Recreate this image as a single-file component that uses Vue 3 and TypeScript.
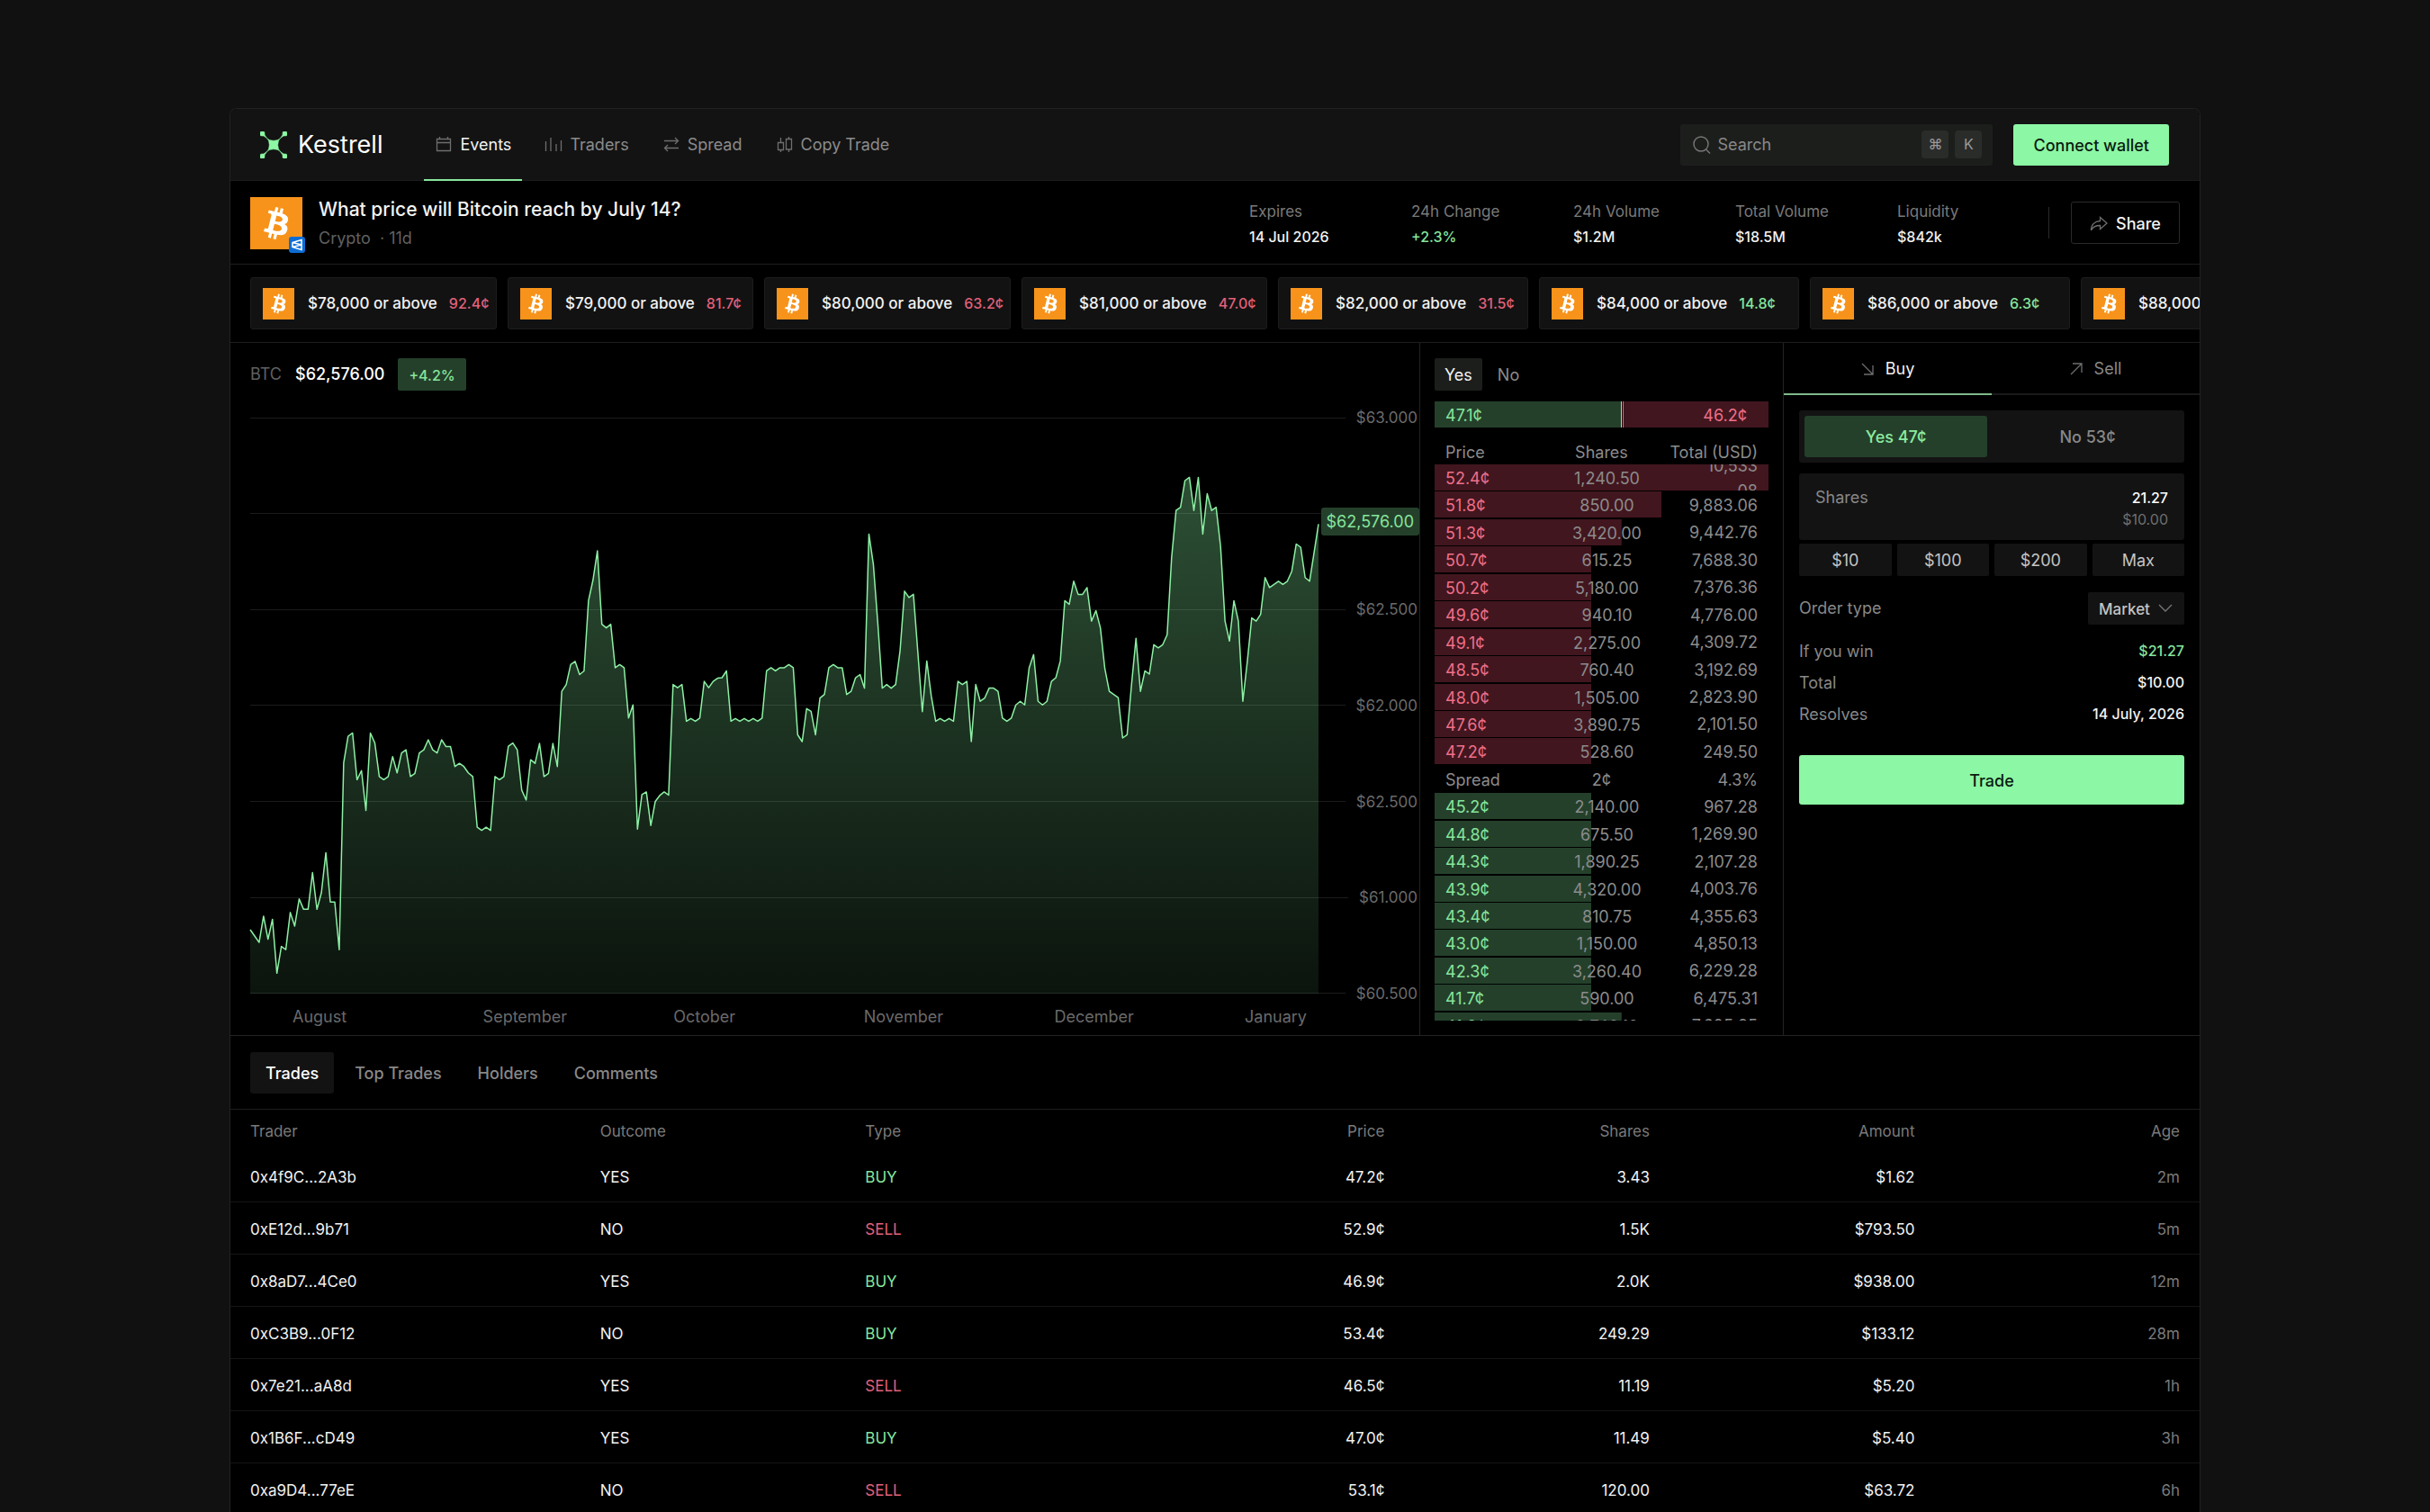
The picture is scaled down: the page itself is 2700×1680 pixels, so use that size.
<script setup lang="ts">
import { ref } from 'vue'

type Tone = 'up' | 'down'

interface Strike {
  label: string
  price: string
  tone: Tone
  width: number
}

interface Level {
  price: string
  shares: string
  total: string
  depth: number
}

interface Trade {
  trader: string
  outcome: 'YES' | 'NO'
  type: 'BUY' | 'SELL'
  price: string
  shares: string
  amount: string
  age: string
}

const stats = [
  { label: 'Expires', value: '14 Jul 2026' },
  { label: '24h Change', value: '+2.3%', up: true },
  { label: '24h Volume', value: '$1.2M' },
  { label: 'Total Volume', value: '$18.5M' },
  { label: 'Liquidity', value: '$842k' },
]

const strikes: Strike[] = [
  { label: '$78,000 or above', price: '92.4¢', tone: 'down', width: 274 },
  { label: '$79,000 or above', price: '81.7¢', tone: 'down', width: 273 },
  { label: '$80,000 or above', price: '63.2¢', tone: 'down', width: 274 },
  { label: '$81,000 or above', price: '47.0¢', tone: 'down', width: 273 },
  { label: '$82,000 or above', price: '31.5¢', tone: 'down', width: 278 },
  { label: '$84,000 or above', price: '14.8¢', tone: 'up', width: 289 },
  { label: '$86,000 or above', price: '6.3¢', tone: 'up', width: 289 },
  { label: '$88,000 or above', price: '2.1¢', tone: 'up', width: 289 },
]

const axis = ['$63.000', '', '$62.500', '$62.000', '$62.500', '$61.000', '$60.500']
const months = ['August', 'September', 'October', 'November', 'December', 'January']

/* One sample per step; a larger number is a lower price. */
const samples = [
  1316, 1330, 1344, 1286, 1337, 1293, 1412, 1353, 1360, 1278, 1308, 1248, 1271, 1271, 1190, 1271,
  1234, 1146, 1255, 1255, 1360, 948, 889, 882, 985, 965, 1053, 882, 904, 978, 985, 978,
  934, 970, 926, 919, 978, 971, 926, 919, 897, 919, 926, 897, 912, 912, 956, 949,
  956, 970, 978, 1090, 1097, 1090, 1097, 978, 985, 978, 911, 904, 919, 1008, 1030, 941,
  949, 905, 978, 971, 905, 956, 790, 775, 731, 724, 753, 745, 590, 545, 480, 642,
  650, 642, 738, 731, 738, 849, 820, 1094, 1018, 1012, 1086, 1033, 1020, 1012, 1019, 775,
  782, 775, 856, 850, 856, 849, 768, 782, 768, 761, 760, 745, 856, 850, 856, 850,
  856, 850, 856, 849, 745, 738, 745, 738, 738, 731, 738, 886, 901, 828, 834, 886,
  805, 797, 738, 731, 738, 738, 797, 790, 760, 753, 783, 443, 510, 640, 783, 775,
  783, 775, 700, 569, 583, 576, 705, 835, 723, 800, 856, 850, 856, 850, 856, 768,
  775, 768, 901, 775, 812, 805, 783, 783, 790, 849, 856, 849, 820, 812, 820, 738,
  709, 812, 820, 812, 768, 760, 723, 590, 598, 547, 576, 576, 561, 635, 612, 650,
  740, 790, 797, 804, 893, 886, 775, 673, 790, 745, 752, 687, 694, 687, 665, 495,
  391, 384, 325, 318, 391, 318, 443, 354, 391, 384, 470, 635, 679, 590, 635, 812,
  725, 628, 635, 620, 539, 561, 554, 547, 554, 547, 525, 465, 472, 539, 547, 484,
  421,
]
const last = samples.length - 1
const line = samples.map((y, x) => `${x},${y}`).join(' ')
const area = `0,1457 ${line} ${last},1457`

const asks: Level[] = [
  { price: '52.4¢', shares: '1,240.50', total: '10,533.08', depth: 100 },
  { price: '51.8¢', shares: '850.00', total: '9,883.06', depth: 68 },
  { price: '51.3¢', shares: '3,420.00', total: '9,442.76', depth: 56 },
  { price: '50.7¢', shares: '615.25', total: '7,688.30', depth: 47 },
  { price: '50.2¢', shares: '5,180.00', total: '7,376.36', depth: 47 },
  { price: '49.6¢', shares: '940.10', total: '4,776.00', depth: 47 },
  { price: '49.1¢', shares: '2,275.00', total: '4,309.72', depth: 47 },
  { price: '48.5¢', shares: '760.40', total: '3,192.69', depth: 47 },
  { price: '48.0¢', shares: '1,505.00', total: '2,823.90', depth: 47 },
  { price: '47.6¢', shares: '3,890.75', total: '2,101.50', depth: 47 },
  { price: '47.2¢', shares: '528.60', total: '249.50', depth: 47 },
]

const bids: Level[] = [
  { price: '45.2¢', shares: '2,140.00', total: '967.28', depth: 47 },
  { price: '44.8¢', shares: '675.50', total: '1,269.90', depth: 47 },
  { price: '44.3¢', shares: '1,890.25', total: '2,107.28', depth: 47 },
  { price: '43.9¢', shares: '4,320.00', total: '4,003.76', depth: 47 },
  { price: '43.4¢', shares: '810.75', total: '4,355.63', depth: 47 },
  { price: '43.0¢', shares: '1,150.00', total: '4,850.13', depth: 47 },
  { price: '42.3¢', shares: '3,260.40', total: '6,229.28', depth: 47 },
  { price: '41.7¢', shares: '590.00', total: '6,475.31', depth: 47 },
  { price: '41.2¢', shares: '2,740.10', total: '7,605.25', depth: 56 },
]

const quick = ['$10', '$100', '$200', 'Max']
const orderType = ref('Market')

const summary = [
  { label: 'If you win', value: '$21.27', up: true },
  { label: 'Total', value: '$10.00' },
  { label: 'Resolves', value: '14 July, 2026' },
]

const tabs = ['Trades', 'Top Trades', 'Holders', 'Comments']
const activeTab = ref('Trades')

const trades: Trade[] = [
  { trader: '0x4f9C...2A3b', outcome: 'YES', type: 'BUY', price: '47.2¢', shares: '3.43', amount: '$1.62', age: '2m' },
  { trader: '0xE12d...9b71', outcome: 'NO', type: 'SELL', price: '52.9¢', shares: '1.5K', amount: '$793.50', age: '5m' },
  { trader: '0x8aD7...4Ce0', outcome: 'YES', type: 'BUY', price: '46.9¢', shares: '2.0K', amount: '$938.00', age: '12m' },
  { trader: '0xC3B9...0F12', outcome: 'NO', type: 'BUY', price: '53.4¢', shares: '249.29', amount: '$133.12', age: '28m' },
  { trader: '0x7e21...aA8d', outcome: 'YES', type: 'SELL', price: '46.5¢', shares: '11.19', amount: '$5.20', age: '1h' },
  { trader: '0x1B6F...cD49', outcome: 'YES', type: 'BUY', price: '47.0¢', shares: '11.49', amount: '$5.40', age: '3h' },
  { trader: '0xa9D4...77eE', outcome: 'NO', type: 'SELL', price: '53.1¢', shares: '120.00', amount: '$63.72', age: '6h' },
]

const bitcoin =
  'M23.189 14.02c.314-2.096-1.283-3.223-3.465-3.975l.708-2.84-1.728-.43-.69 2.765c-.454-.114-.92-.22-1.385-.326l.695-2.783L15.596 6l-.708 2.839c-.376-.086-.746-.17-1.104-.26l.002-.009-2.384-.595-.46 1.846s1.283.294 1.256.312c.7.175.826.638.805 1.006l-.806 3.235c.048.012.11.03.18.057l-.183-.045-1.13 4.532c-.086.212-.303.531-.793.41.018.025-1.256-.313-1.256-.313l-.858 1.978 2.25.561c.418.105.828.215 1.231.318l-.715 2.872 1.727.43.708-2.84c.472.127.93.245 1.378.357l-.706 2.828 1.728.43.715-2.866c2.948.558 5.164.333 6.097-2.333.752-2.146-.037-3.385-1.588-4.192 1.13-.26 1.98-1.003 2.207-2.538zm-3.95 5.538c-.533 2.147-4.148.986-5.32.695l.95-3.805c1.172.293 4.929.872 4.37 3.11zm.535-5.569c-.487 1.953-3.495.96-4.47.717l.86-3.45c.975.243 4.118.696 3.61 2.733z'
</script>

<template>
  <div class="page">
    <div class="frame">
      <header class="topbar">
        <a class="brand" href="#">
          <svg class="mark" viewBox="0 0 30 30" aria-hidden="true">
            <path d="M3.500 1.500C6 5.500 8 8.500 10.500 9.500Q15 11 19.500 9.500C22 8.500 24 5.500 26.500 1.500L28.500 3.500C24.500 6 21.500 8 20.500 10.500Q19 15 20.500 19.500C21.500 22 24.500 24 28.500 26.500L26.500 28.500C24 24.500 22 21.500 19.500 20.500Q15 19 10.500 20.500C8 21.500 6 24.500 3.500 28.500L1.500 26.500C5.500 24 8.500 22 9.500 19.500Q11 15 9.500 10.500C8.500 8 5.500 6 1.500 3.500Z" />
            <rect x="0" y="0" width="5" height="5" rx="1.500" />
            <rect x="25" y="0" width="5" height="5" rx="1.500" />
            <rect x="0" y="25" width="5" height="5" rx="1.500" />
            <rect x="25" y="25" width="5" height="5" rx="1.500" />
          </svg>
          <span>Kestrell</span>
        </a>
        <nav class="nav">
          <a class="active" href="#">
            <svg class="icon" viewBox="0 0 20 20" aria-hidden="true"><path d="M2.500 3.500h15v13h-15zM2.500 7.500h15M5.500 1v2.500M14.500 1v2.500" /></svg>
            Events
          </a>
          <a href="#">
            <svg class="icon" viewBox="0 0 20 20" aria-hidden="true"><path d="M1.500 6v11M7 2v15M13 9v8M18.500 5v12" /></svg>
            Traders
          </a>
          <a href="#">
            <svg class="icon" viewBox="0 0 20 20" aria-hidden="true"><path d="M2 5.500h15.500M14 2l3.500 3.500L14 9M18 13.500H2.500M6 10l-3.500 3.500L6 17" /></svg>
            Spread
          </a>
          <a href="#">
            <svg class="icon" viewBox="0 0 20 20" aria-hidden="true"><path d="M2.500 7.500h6v8h-6zM5.500 2v5.500M5.500 15.500V18M11.500 3.500h6v11.500h-6zM14.500 1v2.500M14.500 15v3" /></svg>
            Copy Trade
          </a>
        </nav>
        <label class="search">
          <svg class="lens" viewBox="0 0 20 20" aria-hidden="true"><circle cx="9" cy="9" r="8" /><path d="M14.500 15l4.500 4.500" /></svg>
          <input type="text" placeholder="Search" aria-label="Search" />
          <kbd>⌘</kbd>
          <kbd>K</kbd>
        </label>
        <button class="connect" type="button">Connect wallet</button>
      </header>

      <section class="hero">
        <div class="coin">
          <svg viewBox="0 0 32 32" aria-hidden="true"><rect width="32" height="32" fill="#f7931a" /><path :d="bitcoin" fill="#fff" /></svg>
          <svg class="source" viewBox="0 0 18 18" aria-hidden="true"><path d="M4 6.500L14 3.500v11L4 11.500zM4 6.500L14 9L4 11.500" /></svg>
        </div>
        <div class="title">
          <h1>What price will Bitcoin reach by July 14?</h1>
          <p>Crypto&nbsp;&nbsp;·&nbsp;11d</p>
        </div>
        <dl class="stats">
          <div v-for="s in stats" :key="s.label">
            <dt>{{ s.label }}</dt>
            <dd :class="{ up: s.up }">{{ s.value }}</dd>
          </div>
        </dl>
        <div class="rule"></div>
        <button class="share" type="button">
          <svg class="icon" viewBox="0 0 20 20" aria-hidden="true"><path d="M11.500 2.500L19 9l-7.500 6.500v-4C7 11.500 3.500 12.500 1.500 17C1.500 10.500 5.500 6.800 11.500 6.500z" /></svg>
          Share
        </button>
      </section>

      <section class="strikes">
        <button v-for="s in strikes" :key="s.label" class="strike" type="button" :style="{ width: s.width + 'px' }">
          <svg viewBox="0 0 32 32" aria-hidden="true"><rect width="32" height="32" fill="#f7931a" /><path :d="bitcoin" fill="#fff" /></svg>
          <span>{{ s.label }}</span>
          <span class="odds" :class="s.tone">{{ s.price }}</span>
        </button>
      </section>

      <div class="main">
        <section class="chart">
          <div class="quote">
            <span class="symbol">BTC</span>
            <span class="value">$62,576.00</span>
            <span class="change">+4.2%</span>
          </div>
          <div class="plot">
            <div class="axis">
              <div v-for="(label, i) in axis" :key="i" class="tick">
                <i></i>
                <span>{{ label }}</span>
              </div>
            </div>
            <svg class="series" :viewBox="`0 186 ${last} 1271`" preserveAspectRatio="none" aria-hidden="true">
              <defs>
                <linearGradient id="fade" x1="0" y1="0" x2="0" y2="1">
                  <stop offset="0" stop-color="#8cf7a4" stop-opacity="0.32" />
                  <stop offset="1" stop-color="#8cf7a4" stop-opacity="0.08" />
                </linearGradient>
              </defs>
              <polygon :points="area" fill="url(#fade)" />
              <polyline :points="line" fill="none" stroke="#8cf0a4" stroke-width="1.500" stroke-linejoin="round" vector-effect="non-scaling-stroke" />
            </svg>
            <span class="tag">$62,576.00</span>
          </div>
          <div class="months">
            <span v-for="m in months" :key="m">{{ m }}</span>
          </div>
        </section>

        <section class="book">
          <div class="sides">
            <button class="active" type="button">Yes</button>
            <button type="button">No</button>
          </div>
          <div class="balance">
            <span class="yes">47.1¢</span>
            <span class="no">46.2¢</span>
          </div>
          <table class="levels">
            <thead>
              <tr>
                <th>Price</th>
                <th>Shares</th>
                <th>Total (USD)</th>
              </tr>
            </thead>
            <tbody>
              <tr v-for="l in asks" :key="l.price" class="level ask" :style="{ '--depth': l.depth + '%' }">
                <td>{{ l.price }}</td>
                <td>{{ l.shares }}</td>
                <td><span>{{ l.total.split('.')[0] }}<wbr />.{{ l.total.split('.')[1] }}</span></td>
              </tr>
              <tr class="spread">
                <td>Spread</td>
                <td>2¢</td>
                <td>4.3%</td>
              </tr>
              <tr v-for="l in bids" :key="l.price" class="level bid" :style="{ '--depth': l.depth + '%' }">
                <td>{{ l.price }}</td>
                <td>{{ l.shares }}</td>
                <td><span>{{ l.total.split('.')[0] }}<wbr />.{{ l.total.split('.')[1] }}</span></td>
              </tr>
            </tbody>
          </table>
        </section>

        <section class="ticket">
          <div class="modes">
            <button class="active" type="button">
              <svg viewBox="0 0 14 14" aria-hidden="true"><path d="M1 1l12 12M13 3v10H3" /></svg>
              Buy
            </button>
            <button type="button">
              <svg viewBox="0 0 14 14" aria-hidden="true"><path d="M1 13L13 1M3 1h10v10" /></svg>
              Sell
            </button>
          </div>
          <div class="form">
            <div class="outcome">
              <button class="active" type="button">Yes 47¢</button>
              <button type="button">No 53¢</button>
            </div>
            <div class="amount">
              <label for="shares">Shares</label>
              <div>
                <input id="shares" type="text" value="21.27" />
                <small>$10.00</small>
              </div>
            </div>
            <div class="quick">
              <button v-for="q in quick" :key="q" type="button">{{ q }}</button>
            </div>
            <div class="order">
              <label for="order-type">Order type</label>
              <div class="select">
                <select id="order-type" v-model="orderType">
                  <option>Market</option>
                  <option>Limit</option>
                </select>
                <svg viewBox="0 0 16 10" aria-hidden="true"><path d="M1 1l7 7 7-7" /></svg>
              </div>
            </div>
            <dl class="summary">
              <div v-for="s in summary" :key="s.label">
                <dt>{{ s.label }}</dt>
                <dd :class="{ up: s.up }">{{ s.value }}</dd>
              </div>
            </dl>
            <button class="trade" type="button">Trade</button>
          </div>
        </section>
      </div>

      <div class="tabs">
        <button v-for="t in tabs" :key="t" type="button" :class="{ active: t === activeTab }" @click="activeTab = t">{{ t }}</button>
      </div>

      <table class="trades">
        <thead>
          <tr>
            <th>Trader</th>
            <th>Outcome</th>
            <th>Type</th>
            <th>Price</th>
            <th>Shares</th>
            <th>Amount</th>
            <th>Age</th>
          </tr>
        </thead>
        <tbody>
          <tr v-for="t in trades" :key="t.trader">
            <td>{{ t.trader }}</td>
            <td>{{ t.outcome }}</td>
            <td :class="t.type === 'BUY' ? 'up' : 'down'">{{ t.type }}</td>
            <td>{{ t.price }}</td>
            <td>{{ t.shares }}</td>
            <td>{{ t.amount }}</td>
            <td>{{ t.age }}</td>
          </tr>
        </tbody>
      </table>
    </div>
  </div>
</template>

<style>
body {
  margin: 0;
  background: #111111;
}
</style>

<style scoped>
.page {
  --line: #1d1d1d;
  --panel: #131313;
  --muted: #888888;
  --green: #86e59c;
  --red: #e0607a;
  box-sizing: border-box;
  height: 100vh;
  overflow: hidden;
  padding: 120px 255px 0;
  background: #111111;
  color: #f2f2f2;
  font-family: Inter, "Liberation Sans", sans-serif;
  font-size: 18px;
  line-height: 24px;
}
.page * {
  box-sizing: border-box;
}
h1, p, dl, dd {
  margin: 0;
}
button, input, select {
  margin: 0;
  padding: 0;
  border: 0;
  background: none;
  color: inherit;
  font: inherit;
}
button {
  padding-top: 2px;
}
a {
  color: inherit;
  text-decoration: none;
}
table {
  border-spacing: 0;
}
th, td {
  padding: 0;
  font-weight: 400;
  text-align: left;
}
.icon {
  width: 20px;
  height: 20px;
  flex: none;
  fill: none;
  stroke: #6e6e6e;
  stroke-width: 1.3;
}
.up {
  color: var(--green);
}
.down {
  color: var(--red);
}
.frame {
  overflow: hidden;
  border: 1px solid #222222;
  border-bottom: 0;
  border-radius: 8px 8px 0 0;
  background: #000;
}

/* Top bar */
.topbar {
  display: flex;
  align-items: center;
  height: 80px;
  padding: 0 34px 0 33px;
  border-bottom: 1px solid #1b1b1b;
  background: var(--panel);
}
.brand {
  display: flex;
  align-items: center;
  gap: 12px;
  margin-right: 46px;
  color: #fff;
  font-size: 27px;
  line-height: 32px;
}
.mark {
  width: 30px;
  height: 30px;
  fill: #8cf7a4;
  stroke: #8cf7a4;
  stroke-width: 0.5;
}
.nav {
  display: flex;
  gap: 13px;
  align-self: stretch;
  margin: 0 auto -1px 0;
}
.nav a {
  display: flex;
  align-items: center;
  gap: 8px;
  padding: 2px 12px 0;
  border-bottom: 2px solid transparent;
  color: #8b8b8b;
}
.nav .active {
  border-color: var(--green);
  color: #f2f2f2;
}
.search {
  display: flex;
  align-items: center;
  gap: 7px;
  width: 347px;
  height: 46px;
  margin-right: 23px;
  padding: 0 12px 0 14px;
  border-radius: 3px;
  background: #1c1e1c;
}
.lens {
  width: 20px;
  height: 20px;
  flex: none;
  fill: none;
  stroke: #777;
  stroke-width: 1.4;
}
.search input {
  flex: 1;
  min-width: 0;
  outline: 0;
}
.search input::placeholder {
  color: #888888;
  opacity: 1;
}
kbd {
  width: 30px;
  height: 31px;
  border-radius: 4px;
  background: #2a2c2a;
  color: #9a9a9a;
  font-family: Inter, "DejaVu Sans", sans-serif;
  font-size: 16px;
  line-height: 31px;
  text-align: center;
}
.connect {
  height: 46px;
  padding: 2px 22px 0;
  border-radius: 3px;
  background: #8cf7a4;
  color: #0b1a0f;
  font-weight: 500;
}

/* Market heading */
.hero {
  display: flex;
  align-items: center;
  height: 93px;
  padding: 1px 22px 0;
  border-bottom: 1px solid var(--line);
}
.coin {
  position: relative;
  width: 58px;
  height: 58px;
  margin-right: 18px;
}
.coin svg {
  display: block;
}
.coin .source {
  position: absolute;
  right: -3px;
  bottom: -4px;
  width: 18px;
  height: 18px;
  border-radius: 3px;
  background: #0d6dd6;
  fill: none;
  stroke: #fff;
  stroke-width: 1.5;
}
.title {
  flex: 1;
  padding-top: 5px;
}
.title h1 {
  font-size: 21px;
  font-weight: 500;
  line-height: 30px;
}
.title p {
  color: #606060;
  line-height: 34px;
}
.stats {
  display: grid;
  grid-template-columns: repeat(5, 168px);
  column-gap: 12px;
  padding-top: 2px;
  font-size: 17px;
  line-height: 28px;
}
.stats dt {
  color: #7a7a7a;
}
.stats dd {
  font-size: 16px;
  font-weight: 500;
}
.rule {
  width: 1px;
  height: 35px;
  margin-right: 24px;
  background: #2a2a2a;
}
.share {
  display: flex;
  align-items: center;
  justify-content: center;
  gap: 9px;
  width: 121px;
  height: 47px;
  border: 1px solid #2a2a2a;
  border-radius: 3px;
  font-weight: 500;
}

/* Strike list */
.strikes {
  display: flex;
  gap: 12px;
  height: 87px;
  padding: 14px 0 14px 22px;
  overflow: hidden;
  border-bottom: 1px solid var(--line);
}
.strike {
  display: flex;
  flex: none;
  align-items: center;
  gap: 15px;
  height: 58px;
  padding: 0 0 0 13px;
  border: 1px solid #1c1c1c;
  border-radius: 3px;
  background: #121212;
  font-size: 17px;
  font-weight: 500;
  white-space: nowrap;
}
.strike svg {
  width: 35px;
  height: 35px;
}
.odds {
  margin-left: -2px;
  font-size: 16px;
}

/* Chart */
.main {
  display: grid;
  grid-template-columns: minmax(0, 1fr) 404px 463px;
  height: 770px;
  border-bottom: 1px solid #222222;
}
.chart {
  padding: 17px 0 0 22px;
}
.quote {
  display: flex;
  align-items: center;
  gap: 15px;
  height: 36px;
  line-height: 38px;
}
.symbol {
  color: #606060;
}
.value {
  color: #fff;
  font-weight: 500;
}
.change {
  height: 36px;
  padding: 0 12px;
  border-radius: 2px;
  background: #24402b;
  color: var(--green);
  font-size: 16px;
  font-weight: 500;
}
.plot {
  position: relative;
  display: grid;
  height: 662px;
  margin-top: 19px;
}
.axis, .series {
  grid-area: 1 / 1;
}
.axis {
  display: flex;
  flex-direction: column;
  justify-content: space-between;
}
.tick {
  display: flex;
  align-items: center;
  gap: 12px;
  height: 22px;
  padding-right: 2px;
  color: #6a6a6a;
  font-size: 17px;
}
.tick i {
  flex: 1;
  height: 1px;
  background: #1c1c1c;
}
.tick span:empty {
  width: 69px;
}
.series {
  width: calc(100% - 112px);
  height: 640px;
  margin: 11px 0;
  overflow: visible;
}
.tag {
  position: absolute;
  top: 111px;
  right: 0;
  padding: 0 6px;
  border-radius: 3px;
  background: #24402b;
  color: var(--green);
  line-height: 31px;
}
.months {
  display: grid;
  grid-template-columns: repeat(5, 1fr) 194px;
  padding-left: 47px;
  color: #6a6a6a;
  line-height: 29px;
}

/* Order book */
.book {
  padding: 17px 16px 0;
  border-left: 1px solid #222222;
  color: #8c8c8c;
}
.sides {
  display: flex;
  gap: 6px;
  margin-bottom: 12px;
}
.sides button {
  height: 36px;
  padding: 2px 11px 0;
  border-radius: 2px;
}
.sides .active {
  background: #1c1e1c;
  color: #f2f2f2;
}
.balance {
  display: flex;
  gap: 1px;
  height: 29px;
  margin-bottom: 12px;
  line-height: 31px;
}
.yes {
  width: 56%;
  padding-left: 12px;
  border-right: 1px solid #8cf7a4;
  background: #24402b;
  color: var(--green);
}
.no {
  flex: 1;
  padding-right: 24px;
  border-left: 1px solid #f2607f;
  background: #42161f;
  color: #ee6f89;
  text-align: right;
}
.levels {
  display: block;
  height: 647px;
  overflow: hidden;
}
.levels thead {
  display: block;
}
.levels tbody {
  display: flex;
  flex-direction: column;
  justify-content: space-between;
  height: 638px;
}
.levels tr {
  display: grid;
  grid-template-columns: repeat(3, 1fr);
  height: 29px;
  padding: 0 12px;
  line-height: 31px;
}
.levels th, .levels td {
  white-space: nowrap;
}
.levels th:nth-child(2), .levels td:nth-child(2) {
  text-align: center;
}
.levels th:last-child, .levels td:last-child {
  text-align: right;
}
.levels .level {
  grid-template-columns: 92px 1fr 80px;
  overflow: hidden;
  background: linear-gradient(var(--bar), var(--bar)) no-repeat 0 0 / var(--depth) 100%;
}
.levels .level td:last-child {
  display: grid;
  align-content: center;
  height: 31px;
  line-height: 28px;
  white-space: normal;
}
.ask {
  --bar: #42161f;
}
.bid {
  --bar: #24402b;
}
.ask td:first-child {
  color: #ee6f89;
}
.bid td:first-child {
  color: var(--green);
}

/* Order ticket */
.ticket {
  border-left: 1px solid #222222;
}
.modes {
  display: grid;
  grid-template-columns: 1fr 1fr;
  height: 58px;
}
.modes button {
  display: flex;
  align-items: center;
  justify-content: center;
  gap: 13px;
  border-bottom: 2px solid #1a1a1a;
  color: var(--muted);
}
.modes .active {
  border-color: #7fb98c;
  color: #f2f2f2;
}
.modes svg {
  width: 14px;
  height: 14px;
  fill: none;
  stroke: #6e6e6e;
  stroke-width: 1.3;
}
.form {
  padding: 17px 17px 0;
}
.outcome {
  display: grid;
  grid-template-columns: 1fr 1fr;
  gap: 10px;
  padding: 6px;
  border-radius: 3px;
  background: var(--panel);
}
.outcome button {
  height: 46px;
  border-radius: 3px;
  color: var(--muted);
  font-weight: 500;
}
.outcome .active {
  background: #24402b;
  color: #8ceb9f;
}
.amount {
  display: flex;
  justify-content: space-between;
  height: 74px;
  margin: 12px 0 4px;
  padding: 15px 18px 0;
  border-radius: 3px;
  background: var(--panel);
  color: var(--muted);
}
.amount div {
  display: flex;
  flex-direction: column;
  align-items: flex-end;
}
.amount input {
  width: 120px;
  height: 24px;
  color: #fff;
  font-size: 16px;
  font-weight: 500;
  text-align: right;
}
.amount small {
  color: #6e6e6e;
  font-size: 16px;
}
.quick {
  display: grid;
  grid-template-columns: repeat(4, 1fr);
  gap: 6px;
}
.quick button {
  height: 36px;
  border-radius: 2px;
  background: var(--panel);
  color: #c4c4c4;
}
.order {
  display: flex;
  align-items: center;
  justify-content: space-between;
  margin: 18px 0 12px;
  color: var(--muted);
}
.select {
  position: relative;
}
.select select {
  width: 107px;
  height: 36px;
  padding: 1px 12px 0;
  border-radius: 2px;
  background: var(--panel);
  color: #c4c4c4;
  font-size: 17px;
  font-weight: 500;
  appearance: none;
}
.select svg {
  position: absolute;
  top: 13px;
  right: 13px;
  width: 16px;
  height: 10px;
  fill: none;
  stroke: #777;
  stroke-width: 1.3;
  pointer-events: none;
}
.summary {
  line-height: 35px;
}
.summary div {
  display: flex;
  justify-content: space-between;
}
.summary dt {
  color: var(--muted);
}
.summary dd {
  font-size: 16px;
  font-weight: 500;
}
.trade {
  width: 100%;
  height: 55px;
  margin-top: 28px;
  border-radius: 3px;
  background: #8cf7a4;
  color: #0b1a0f;
  font-weight: 500;
}

/* Activity */
.tabs {
  display: flex;
  gap: 6px;
  height: 82px;
  padding: 18px 22px;
  border-bottom: 1px solid var(--line);
}
.tabs button {
  height: 46px;
  padding: 2px 17px 0;
  border-radius: 3px;
  color: var(--muted);
  font-weight: 500;
}
.tabs .active {
  background: #131313;
  color: #fff;
}
.trades, .trades thead, .trades tbody {
  display: block;
}
.trades {
  font-size: 17px;
}
.trades tr {
  display: grid;
  grid-template-columns: 4fr repeat(6, 3fr);
  column-gap: 12px;
  align-items: center;
  height: 58px;
  padding: 2px 22px 0;
  border-bottom: 1px solid #151515;
}
.trades thead tr {
  height: 45px;
  border: 0;
}
.trades th {
  color: #7a7a7a;
}
.trades th:nth-child(n + 4), .trades td:nth-child(n + 4) {
  text-align: right;
}
.trades td:last-child {
  color: #7a7a7a;
}
</style>
